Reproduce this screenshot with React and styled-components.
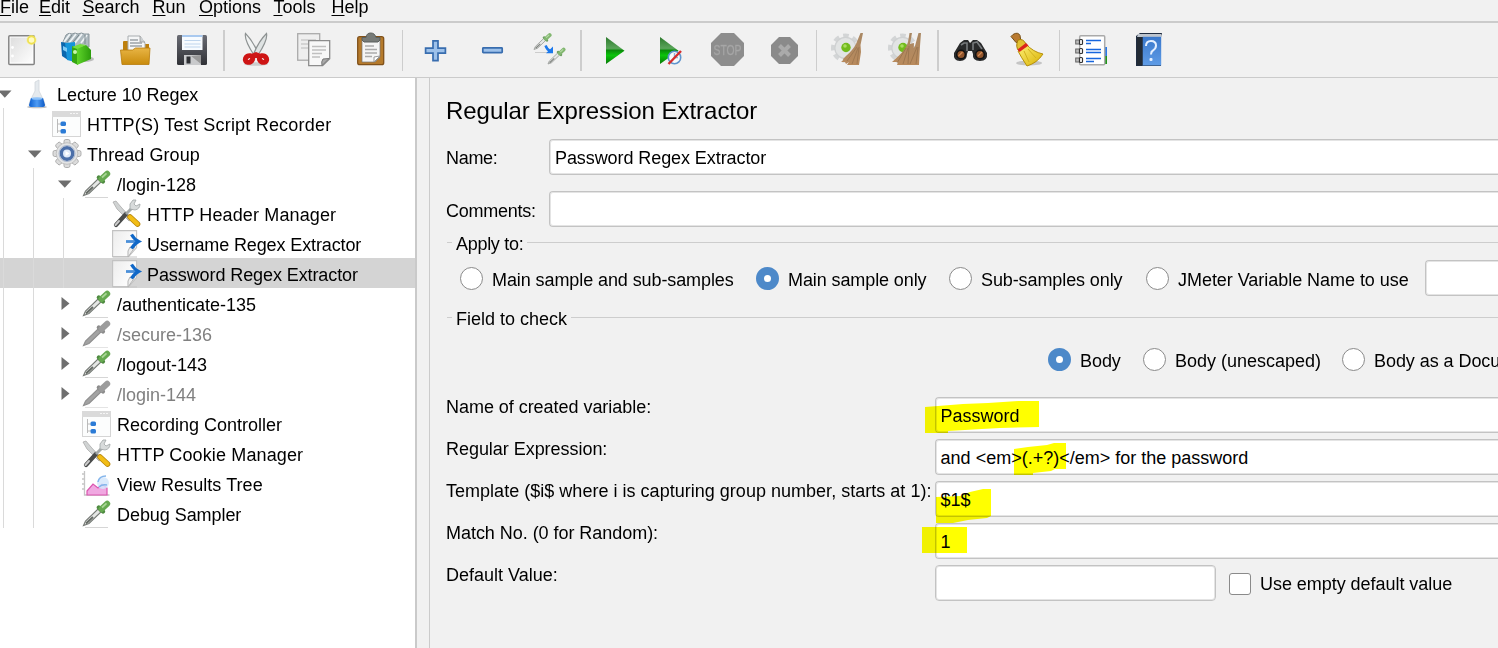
import React from 'react';
import styled, { createGlobalStyle } from 'styled-components';

const Global = createGlobalStyle`
  html, body { margin: 0; padding: 0; background: #f1f1f1; overflow: hidden; }
  * { box-sizing: border-box; }
`;

const Window = styled.div`
  display: flex; flex-direction: column; width: 1498px; height: 648px; overflow: hidden;
  background: #f1f1f1; color: #000; white-space: nowrap; font-kerning: none;
  font: 18px/20px "Liberation Sans", Arial, sans-serif;
`;
const MenuBar = styled.nav`
  display: flex; flex: none; height: 23px; border-bottom: 2px solid #cbcbcb;
`;
const MenuItem = styled.span`
  flex: none; width: ${p => p.$w}px; margin-top: -3px; margin-left: -1px; padding-left: 1px;
  u { text-underline-offset: 2px; text-decoration-thickness: 1px; text-decoration-skip-ink: none; }
`;
const ToolBar = styled.div`
  display: flex; flex: none; height: 55px; padding-top: 7px; border-bottom: 1px solid #cbcbcb;
`;
const ToolGroup = styled.div`
  display: flex; &:first-child { margin-left: -7px; }
`;
const ToolButton = styled.span`
  width: 57px; padding: 2px 11px 0 10px;
  svg { display: block; width: 36px; height: 36px; overflow: visible; }
`;
const Separator = styled.span`
  flex: none; width: ${p => p.$w}px; height: 41px; padding-left: ${p => p.$at}px;
  &::before { content: ""; display: block; width: ${p => p.$t}px; height: 100%; background: #cdcdcd; }
`;
const Main = styled.div` display: flex; flex: 1; min-height: 0; `;
const Tree = styled.div`
  flex: none; width: 417px; background: #fff; border-right: 2px solid #cacaca;
`;
const TreeRow = styled.div`
  display: flex; height: 30px; padding-left: 3px;
  background: ${p => (p.$selected ? '#d4d4d4' : 'transparent')};
  color: ${p => (p.$disabled ? '#808080' : '#000')};
`;
const Guide = styled.span` flex: none; width: 30px; border-left: 1px solid #dadada; `;
const Toggle = styled.svg` flex: none; width: 19px; height: 30px; overflow: visible; `;
const TreeIcon = styled.svg` flex: none; width: 30px; height: 30px; overflow: visible; `;
const TreeText = styled.span` padding: 7px 0 0 5px; letter-spacing: ${p => p.$ls || 0}px; `;
const Panel = styled.main`
  flex: 1; min-width: 0; margin-left: 12px; padding: 20px 0 0 16px; border-left: 1px solid #cbcbcb; overflow: hidden;
`;
const Heading = styled.h1` margin: 0; height: 41px; font-size: 24px; line-height: 26px; font-weight: 400; letter-spacing: -0.03px; `;
const NameRow = styled.div` display: flex; height: 36px; margin-bottom: ${p => p.$gap || 0}px; `;
const Label = styled.label` flex: none; width: ${p => p.$w}px; padding-top: ${p => p.$top || 0}px; letter-spacing: ${p => p.$ls || 0}px; `;
const Field = styled.div`
  position: relative; flex: ${p => (p.$w ? 'none' : 1)}; width: ${p => (p.$w ? p.$w + 'px' : 'auto')};
  height: 36px; padding: 8px 0 0 5px; background: #fff; border: 1px solid #c3c3c3; letter-spacing: ${p => p.$ls || 0}px;
  box-shadow: inset 0 0 0 1px #e4e4e4; border-radius: 4px;
  ${p => !p.$w && 'border-right: 0; border-top-right-radius: 0; border-bottom-right-radius: 0; margin-right: -4px;'}
`;
const GroupTitle = styled.div`
  display: flex; align-items: center; height: 20px; gap: 4px; letter-spacing: ${p => p.$ls || 0}px;
  &::before { content: ""; width: 5px; height: 1px; margin: -3px 0 0 1px; background: #cdcdcd; }
  &::after { content: ""; flex: 1; height: 1px; margin-top: -3px; background: #cdcdcd; }
`;
const Radios = styled.div`
  display: flex; height: 36px; padding-left: ${p => p.$left}px; margin: ${p => p.$m};
`;
const RadioItem = styled.span`
  display: flex; flex: none; width: ${p => p.$w}px; gap: 9px; padding-top: 10px; letter-spacing: ${p => p.$ls ?? -0.06}px;
`;
const Dot = styled.i`
  width: 23px; height: 23px; margin-top: -3px; border-radius: 50%;
  border: ${p => (p.$on ? '8px solid #4d89c9' : '1.5px solid #8a8a8a')}; background: #fff;
`;
const Form = styled.div` display: flex; flex-direction: column; gap: 6px; `;
const FormRow = styled.div` display: flex; height: 36px; `;
const Check = styled.i`
  width: 22px; height: 22px; margin: 8px 9px 0 13px; border: 1.5px solid #8a8a8a; border-radius: 3px; background: #fff;
`;
const CheckLabel = styled.span` padding-top: 9px; letter-spacing: -0.04px; `;
const Marker = styled.svg`
  position: absolute; left: -18px; top: -6px; width: 160px; height: 50px; mix-blend-mode: multiply; pointer-events: none;
`;

const Defs = () => (
  <svg width="0" height="0" style={{ position: 'absolute' }}>
    <defs>
      <linearGradient id="paper" x2="1" y2="1"><stop stopColor="#dedede" /><stop offset="1" stopColor="#fdfdfd" /></linearGradient>
      <linearGradient id="sheet" x2="1" y2=".6"><stop stopColor="#ececec" /><stop offset="1" stopColor="#ffffff" /></linearGradient>
      <linearGradient id="gold" x2="0" y2="1"><stop stopColor="#e8b545" /><stop offset="1" stopColor="#c98b0c" /></linearGradient>
      <linearGradient id="dark" x2="0" y2="1"><stop stopColor="#6a6c74" /><stop offset="1" stopColor="#303136" /></linearGradient>
      <linearGradient id="play" x2="0" y2="1"><stop stopColor="#2c7a2c" /><stop offset=".42" stopColor="#5aa45a" /><stop offset=".5" stopColor="#0a8d0a" /><stop offset=".68" stopColor="#0bc50b" /><stop offset="1" stopColor="#087808" /></linearGradient>
      <linearGradient id="broomTan" x2="0" y2="1"><stop stopColor="#a98864" /><stop offset="1" stopColor="#b98a5c" /></linearGradient>
      <linearGradient id="blue" x2="0" y2="1"><stop stopColor="#3a78cc" /><stop offset="1" stopColor="#5f9ce6" /></linearGradient>
      <linearGradient id="liquid" x2="1"><stop stopColor="#0c5fd0" /><stop offset=".5" stopColor="#4f9cf4" /><stop offset="1" stopColor="#0b58c4" /></linearGradient>
      <linearGradient id="green" x2="1"><stop stopColor="#5fd52a" /><stop offset="1" stopColor="#2c9c0c" /></linearGradient>
      <linearGradient id="straw" x2="1" y2="1"><stop stopColor="#fff27a" /><stop offset="1" stopColor="#d8b000" /></linearGradient>
    </defs>
  </svg>
);

const NewFile = () => (
  <svg viewBox="0 0 36 36"><rect x="5.8" y="3.8" width="25.4" height="28.6" rx="1" fill="#fff" stroke="#858585" strokeWidth="1.5" />
    <rect x="7.5" y="5.5" width="22" height="25" fill="url(#paper)" />
    <g fill="#fff"><circle cx="9.5" cy="15.5" r="1.4" /><circle cx="9.5" cy="24" r="1.4" /></g>
    <circle cx="28.5" cy="8" r="5" fill="#f7ee72" opacity=".6" /><circle cx="28.5" cy="8" r="3.6" fill="#fffbc0" stroke="#efe050" strokeWidth="1.6" /></svg>
);
const Templates = () => (
  <svg viewBox="0 0 36 36"><ellipse cx="25" cy="27" rx="9" ry="3" fill="#999" opacity=".6" />
    <path d="M3 10 L6 3 Q9 0 12 2 Q15 0 18 2 Q22 0 24 2 L29 2 V15 H3Z" fill="#aebac0" stroke="#8b979d" />
    <path d="M4 10L10 2M9 11L16 2M15 11L22 2M21 11L27 3" fill="none" stroke="#eef3f5" strokeWidth="1.8" />
    <path d="M7 10L12 3M13 10L19 3M25 12V3" fill="none" stroke="#79868c" />
    <path d="M1 10 L7 11 L8 28 L2 24Z" fill="#0c67ad" /><path d="M5 11 L15 10 V30 L7 28Z" fill="#1695da" /><path d="M3 14l4 2v4l-4-2z" fill="#7ecbf5" />
    <path d="M12 14 L17 16 L18 33 L12 30Z" fill="#35a512" /><path d="M17 16 L26 13 L31 18 V27 L17 33Z" fill="url(#green)" /><path d="M12 15 L20 12 L26 13 L17 17Z" fill="#78df3e" /><circle cx="15" cy="20" r="2" fill="#c9f5ae" /></svg>
);
const OpenFile = () => (
  <svg viewBox="0 0 36 36"><path d="M6 10q0-1 1-1h8l2 3h15v18H6Z" fill="#bd7f0c" />
    <path d="M11 4h12l5 7v11H11Z" fill="#f5f6f7" stroke="#a9adb0" /><path d="M13 8h8M13 11h12M13 14h12" stroke="#9ca3a8" strokeWidth="1.3" /><path d="M23 4v6h5" fill="#ccd0d3" stroke="#999" strokeWidth=".8" />
    <path d="M3.5 18h12l3-2h14.5l-1 16.5H5Z" fill="url(#gold)" stroke="#b87b0a" strokeWidth=".8" /></svg>
);
const Save = () => (
  <svg viewBox="0 0 36 36"><rect x="3" y="3" width="30" height="30" rx="1.5" fill="url(#dark)" /><rect x="8" y="3" width="20.5" height="15" fill="#f7fbff" />
    <path d="M8 3h20.5v2H8z" fill="#a9c9ef" /><path d="M10.5 8.5h16M10.5 12h16M10.5 15h16" stroke="#c0d6ee" strokeWidth="1.2" /><rect x="10" y="23" width="17" height="10" fill="#c9cacc" /><path d="M17 24l10 8V23z" fill="#999" /><rect x="12.5" y="24.5" width="4" height="7" fill="#2f3034" /></svg>
);
const Cut = () => (
  <svg viewBox="0 0 36 36"><ellipse cx="18" cy="32" rx="12" ry="1.8" fill="#ccc" />
    <path d="M7.5 1.5Q6 8 16 23L20 21Q15 9 7.5 1.5Z" fill="#f1f3f3" stroke="#8d9292" strokeWidth="1.2" /><path d="M28.5 1.5Q30 8 20 23L16 21Q21 9 28.5 1.5Z" fill="#dfe3e3" stroke="#8d9292" strokeWidth="1.2" />
    <path d="M13 22l5-2 5 2-2 4h-6z" fill="#cd1818" />
    <g fill="#f1f1f1" stroke="#ce1515" strokeWidth="5"><ellipse cx="11" cy="27" rx="3.8" ry="3.2" transform="rotate(-30 11 27)" /><ellipse cx="25" cy="27" rx="3.8" ry="3.2" transform="rotate(30 25 27)" /></g></svg>
);
const Copy = () => (
  <svg viewBox="0 0 36 36"><rect x="2.7" y="1.7" width="22" height="26.5" fill="#eee" stroke="#aaa" strokeWidth="1.3" /><path d="M6 8h15M6 12h12M6 16h13" stroke="#ccc" strokeWidth="1.4" />
    <path d="M13.7 8.7h21v18l-7 7h-14Z" fill="#f8f8f8" stroke="#8d8d8d" strokeWidth="1.3" /><path d="M17 14.5h14M17 18h14M17 21.5h10M17 25h8" stroke="#c0c0c0" strokeWidth="1.3" /><path d="M34 26.5l-7 7q-1-4 1-6.5z" fill="#aaa" stroke="#777" /></svg>
);
const Paste = () => (
  <svg viewBox="0 0 36 36"><rect x="5.7" y="4.7" width="26" height="28" rx="2" fill="#b57a2b" stroke="#80511a" strokeWidth="1.3" />
    <path d="M10 8h18v17l-5 5H10Z" fill="#f5f5f5" stroke="#777" strokeWidth=".7" /><path d="M13 14h9M13 17.5h12M13 21h12M13 24.5h7" stroke="#aaa" strokeWidth="1.6" /><path d="M28 24l-6 6v-5z" fill="#fff" stroke="#999" /><path d="M10 8V5.5h4Q14.5 1 18.7 1T24 5.5h4V8l-2 2H12Z" fill="#777b78" stroke="#5b5f5c" /></svg>
);
const Plus = () => (
  <svg viewBox="0 0 36 36"><path d="M17 8.8h5v7.4h7.4v5H22v7.4h-5v-7.4H9.6v-5H17Z" fill="#9dc1ea" stroke="#386daf" strokeWidth="1.7" /></svg>
);
const Minus = () => (
  <svg viewBox="0 0 36 36"><rect x="9.8" y="15.8" width="19.4" height="4.8" rx=".6" fill="#9dc1ea" stroke="#386daf" strokeWidth="1.7" /></svg>
);
const Dropper = ({ t, off }) => (
  <g transform={t}>
    <path d="M1.5 25 L3.5 20.5 L16 8.5 L19 11.5 L7 23 Z" fill={off ? '#a3a3a3' : '#e4e6e4'} stroke={off ? '#8f8f8f' : '#767a76'} strokeWidth="1.1" />
    {!off && <path d="M4 23 L11 16.5" stroke="#666b66" strokeWidth="2" />}
    <path d="M16.8 7 L21 11" stroke={off ? '#8b8b8b' : '#4d8a3f'} strokeWidth="4.2" strokeLinecap="round" />
    <path d="M19.5 8.5 L25.2 3.2" stroke={off ? '#9b9b9b' : '#67a951'} strokeWidth="6" strokeLinecap="round" />
    {!off && <path d="M20 7 L24.5 2.8" stroke="#a9d795" strokeWidth="1.8" />}
  </g>
);
const ToggleIcon = () => (
  <svg viewBox="0 0 36 36"><path d="M5 20.5h17" stroke="#ccc" /><g opacity=".8"><Dropper t="translate(3 1) scale(.66)" /><Dropper t="translate(17 15.5) scale(.66)" /></g><path d="M15.5 13.5 Q17 18 21 19.5" fill="none" stroke="#1c79ec" strokeWidth="2.4" /><path d="M23 14.5v6.8h-7z" fill="#1c79ec" /></svg>
);
const Start = () => <svg viewBox="0 0 36 36"><path d="M10 5L28.5 18.7 10 32Z" fill="url(#play)" /></svg>;
const StartNoPause = () => (
  <svg viewBox="0 0 36 36"><path d="M7 5L25.5 18.7 7 32Z" fill="url(#play)" /><circle cx="21.5" cy="25.5" r="6.2" fill="#f7f9fb" stroke="#5e94cd" strokeWidth="1.6" /><path d="M21.5 21v4.5h3.5" fill="none" stroke="#8ab1dc" strokeWidth="1.4" /><path d="M15.5 32L28 19" stroke="#d52c2c" strokeWidth="2.4" /></svg>
);
const Stop = () => (
  <svg viewBox="0 0 36 36"><path d="M11 1h13l10 10v13L24 34H11L1 24V11Z" fill="#8d8d8d" /><text x="17.5" y="23" textAnchor="middle" textLength="28" lengthAdjust="spacingAndGlyphs" fontSize="15" fontWeight="400" fill="#a8a8a8" stroke="#a0a0a0" strokeWidth=".4">STOP</text></svg>
);
const Shutdown = () => (
  <svg viewBox="0 0 36 36"><path d="M12 5h11l8 8v11l-8 8H12l-8-8V13Z" fill="#8a8a8a" /><path d="M12.5 13.5l10 10m0-10l-10 10" stroke="#aaa" strokeWidth="4" /></svg>
);
const Gear = () => (
  <g><circle cx="16.5" cy="16" r="11.8" fill="none" stroke="#d3d5d6" strokeWidth="5.5" strokeDasharray="5.3 3.97" strokeDashoffset="2.6" /><circle cx="16.5" cy="16" r="11.3" fill="#cfd1d2" /><circle cx="16.5" cy="16" r="10" fill="#e2e4e4" /><circle cx="17" cy="15.5" r="4.7" fill="#72bb1d" /><circle cx="16" cy="14" r="1.8" fill="#aadd5f" /></g>
);
const Clear = () => (
  <svg viewBox="0 0 36 36"><Gear /><path d="M31.5 1H34L31.5 13 32 20 30 33H18l2-3-3 2-1-2h-4q3-2 2-3l3-3q7-6 10-12Z" fill="url(#broomTan)" /><path d="M28 15L18 29M29 16l-6 16M30 15l-2 17" stroke="#8f6b46" strokeWidth=".8" opacity=".7" /></svg>
);
const ClearAll = () => (
  <svg viewBox="0 0 36 36"><Gear /><path d="M23.5 1H26L24 12l4-1-1 19-4 3H11l1-3H6q8-7 12-12 3-4 4-8ZM32.5 1H35l-1 13-1 19H21l-1-4q6-10 9-15Z" fill="url(#broomTan)" /><path d="M20 16L11 31M22 16l-5 16M23 14l-1 18M31 15l-7 17M32 15l-2 17" stroke="#8f6b46" strokeWidth=".9" opacity=".7" /></svg>
);
const Search = () => (
  <svg viewBox="0 0 36 36"><path d="M8 11L12 8h4l2 3 3-3h4l4 3 6 10q1 8-7 8t-7-7l-1-3h-4l-1 3q0 7-7 7t-6-8Z" fill="#292a2b" /><path d="M9 13l3-2h3v8M21 18v-7l4-1 5 7" fill="none" stroke="#777b7d" strokeWidth="1.6" /><circle cx="9" cy="22.5" r="4.3" fill="#91552c" stroke="#111" strokeWidth="1.5" /><circle cx="28" cy="22.5" r="4.3" fill="#91552c" stroke="#111" strokeWidth="1.5" /><path d="M6.5 24l4-4M26 24l4-4" stroke="#d58c56" strokeWidth="1.2" /></svg>
);
const Broom = () => (
  <svg viewBox="0 0 36 36"><ellipse cx="20" cy="31" rx="13" ry="2.5" fill="#c5c5c5" /><path d="M4 2.5q5-3 7 1l1 6-5 1-5-6Z" fill="#b97a30" stroke="#77501a" /><path d="M9 8q5-2 8 4l-7 7q-4-4-1-11Z" fill="#e2c132" stroke="#a87e06" /><path d="M17 12Q24 20 34 22Q28 31 18 34Q12 25 9 19Z" fill="url(#straw)" stroke="#b68f09" /><path d="M15 19l5 11M19 17l8 9" stroke="#d3b11f" /><path d="M8.5 17.5L17 11l2.5 2.5-9 6.5Z" fill="#db241e" /></svg>
);
const FunctionHelper = () => (
  <svg viewBox="0 0 36 36"><path d="M31 15h4v9h-4z" fill="#2979e8" /><path d="M31 24h4v8h-4z" fill="#1f9418" /><rect x="7.7" y="3.7" width="25" height="29" rx="1" fill="#fff" stroke="#aaa" strokeWidth="1.5" /><path d="M14 8.5h15M14 11.5h5M14 17.5h15M14 20.5h15M14 26.5h15M14 29.5h8" stroke="#1766dd" strokeWidth="1.3" />
    {[10, 19, 28].map(y => <g key={y}><rect x="3.7" y={y - 2} width="4" height="4" fill="#bbb" stroke="#666" /><rect x="7.5" y={y - 2.5} width="3" height="5" rx="1" fill="#fff" stroke="#333" strokeWidth="1.2" /></g>)}</svg>
);
const Help = () => (
  <svg viewBox="0 0 36 36"><path d="M7 4l4-3h22l-1 4v29H7Z" fill="#1f2c40" /><path d="M9 2h23l1 3H8Z" fill="#bec5ce" /><rect x="13.5" y="4.8" width="18.7" height="28.7" fill="url(#blue)" /><path d="M8 5h5.5v28H8z" fill="#222a34" /><path d="M17 14q0-5 5-5t5 4.5q0 3-3 5-2 1-2 4" fill="none" stroke="#e5f0ff" strokeWidth="2" /><rect x="20.5" y="26" width="3" height="3" rx="1" fill="#e5f0ff" /></svg>
);

const toolGroups = [
  { icons: [NewFile, Templates, OpenFile, Save], sep: [7, 2, 2] },
  { icons: [Cut, Copy, Paste], sep: [7, 3, 1] },
  { icons: [Plus, Minus, ToggleIcon], sep: [9, 3, 2] },
  { icons: [Start, StartNoPause, Stop, Shutdown], sep: [5, 2, 1] },
  { icons: [Clear, ClearAll], sep: [9, 4, 2] },
  { icons: [Search, Broom], sep: [6, 3, 1] },
  { icons: [FunctionHelper, Help] },
];

const gearTeeth = Array.from({ length: 8 }, (_, k) => k * 45);

const treeIcons = {
  flask: <g><ellipse cx="15" cy="29" rx="10" ry="1.3" fill="#bbb" /><path d="M13 4l4-2v11l5 10 1 4q0 2-2 2H9q-2 0-2-2l1-4 5-10Z" fill="#e5eaee" stroke="#d0d6da" strokeWidth=".8" /><path d="M9 20h12l2 7q0 2-2 2H9q-2 0-2-2Z" fill="url(#liquid)" /><ellipse cx="15" cy="20.5" rx="5.5" ry="1.3" fill="#8fc3fa" /></g>,
  recorder: <g><rect x=".5" y="4.5" width="28" height="24" fill="#fcfdfd" stroke="#d5d5d5" /><rect y="3" width="29" height="6" fill="#dadada" /><path d="M18 5.5h9" stroke="#f5f5f5" strokeDasharray="2 1" /><path d="M5.5 11v14M5.5 16h4M5.5 23h4" stroke="#bbb" /><g fill="#2b7bd6"><rect x="8.5" y="13.5" width="5.5" height="4.5" rx="1.5" /><rect x="8.5" y="21" width="5.5" height="4.5" rx="1.5" /></g></g>,
  gear: <g><g fill="#dcdcdc" stroke="#a8a8a8" strokeWidth=".9">{gearTeeth.map(a => <rect key={a} x="12" y="1.5" width="6" height="8" rx="1.8" transform={`rotate(${a} 15 15.5)`} />)}</g><circle cx="15" cy="15.5" r="10.8" fill="#e2e3e4" stroke="#b8b8b8" strokeWidth=".8" /><circle cx="15" cy="15.5" r="5.7" fill="#dfe9f8" stroke="#4b6fa9" strokeWidth="3.4" /><circle cx="15" cy="15.5" r="8" fill="none" stroke="#a6b4cc" /><path d="M13.5 13l4 2.5-4 2.5z" fill="#fff" /></g>,
  dropper: <g><path d="M3 29.5h23" stroke="#ccc" strokeWidth=".8" /><Dropper t="translate(0 2.5)" /></g>,
  dropperOff: <g><path d="M3 29.5h23" stroke="#ddd" strokeWidth=".8" /><Dropper t="translate(0 2.5)" off /></g>,
  tools: <g transform="translate(0 2)"><path d="M1 2l3-1 5 6 11 12-3 2L5 9Z" fill="#d0d3d3" stroke="#a5a5a5" strokeWidth=".7" /><path d="M18 17L25.5 24" stroke="#b8860b" strokeWidth="5.6" strokeLinecap="round" /><path d="M18 17L25.5 24" stroke="#f2bd16" strokeWidth="4" strokeLinecap="round" /><path d="M4 25L14 14" stroke="#4a4c4c" strokeWidth="4.2" strokeLinecap="round" /><path d="M3.5 25L7 21" stroke="#c9c9c9" strokeWidth="2" strokeLinecap="round" /><path d="M14 14L21 7" stroke="#a3a8a8" strokeWidth="3" /><path d="M18 9l0-5 3-4 3 0-2 4 2 2 4-2q0 5-5 6Z" fill="#d8dbdb" stroke="#a0a4a4" strokeWidth=".8" /></g>,
  extractor: <g><path d="M.6 2.6h24v17l-8 9H.6Z" fill="url(#sheet)" stroke="#c2c2c2" strokeWidth="1.1" /><path d="M1 29h24" stroke="#c5c5c5" /><path d="M23 19l-7 10q-1-7 2-10Z" fill="#eee" stroke="#b5b5b5" /><path d="M14 13.5h11" stroke="#4b8fd8" strokeWidth="2.8" /><path d="M19.5 6.5q3 5 7 7-4 2-7 7" fill="none" stroke="#1068c8" strokeWidth="3.2" /></g>,
  chart: <g transform="translate(0 1)"><path d="M2.5 2v24h25M0 5h2M0 10h2M0 15h2M0 20h2" fill="none" stroke="#c5c5c5" strokeWidth="1.3" /><path d="M5 22l6-7 5 4 4-4 5 4v7H5Z" fill="#f0a8e1" stroke="#db55af" strokeWidth="1.2" /><circle cx="21" cy="14" r="6" fill="#d3e6fb" opacity=".85" /><path d="M16 13q1-6 8-6M17 18q3-3 8-2" fill="none" stroke="#83b4eb" strokeWidth="1.5" /></g>,
};

const nodes = [
  [0, 'flask', 'Lecture 10 Regex', 'open', '', -0.05],
  [1, 'recorder', 'HTTP(S) Test Script Recorder', '', '', 0.2],
  [1, 'gear', 'Thread Group', 'open', '', 0.06],
  [2, 'dropper', '/login-128', 'open'],
  [3, 'tools', 'HTTP Header Manager', '', '', 0.13],
  [3, 'extractor', 'Username Regex Extractor', '', '', -0.12],
  [3, 'extractor', 'Password Regex Extractor', '', 'selected', -0.09],
  [2, 'dropper', '/authenticate-135', 'closed'],
  [2, 'dropperOff', '/secure-136', 'closed', 'off'],
  [2, 'dropper', '/logout-143', 'closed'],
  [2, 'dropperOff', '/login-144', 'closed', 'off'],
  [2, 'recorder', 'Recording Controller'],
  [2, 'tools', 'HTTP Cookie Manager', '', '', 0.13],
  [2, 'chart', 'View Results Tree', '', '', 0.06],
  [2, 'dropper', 'Debug Sampler', '', '', -0.06],
];
const toggles = { open: 'M-5 12.5H8.5L1.8 19.7Z', closed: 'M-1.5 9V22L6.5 15.5Z' };

const menus = [['F', 'ile', 40], ['E', 'dit', 44.5], ['S', 'earch', 71], ['R', 'un', 47.5], ['O', 'ptions', 75.5], ['T', 'ools', 59], ['H', 'elp', 60]];

const Radio = ({ w, on, ls, children }) => <RadioItem $w={w} $ls={ls}><Dot $on={on} />{children}</RadioItem>;

const formRows = [
  ['Name of created variable:', 'Password', '7,15 20,14 45,12 70,11 100,9 121,9 121,35 82,36 64,37 30,39 30,41 7,41'],
  ['Regular Expression:', 'and <em>(.+?)</em> for the password', '96,15 110,13 129,11 136,9 148,9 148,35 137,35 133,37 115,39 115,41 96,41'],
  ['Template ($i$ where i is capturing group number, starts at 1):', '$1$', '18,21 42,20 52,16 65,13 73,13 73,40 69,42 50,44 35,47 18,47'],
  ['Match No. (0 for Random):', '1', '4,9 49,9 49,35 4,35'],
];

export default function App() {
  return (
    <Window>
      <Global />
      <Defs />
      <MenuBar>{menus.map(([u, rest, w]) => <MenuItem key={rest} $w={w}><u>{u}</u>{rest}</MenuItem>)}</MenuBar>
      <ToolBar>
        {toolGroups.map(({ icons, sep }, i) => (
          <ToolGroup key={i}>
            {icons.map((Icon, k) => <ToolButton key={k}><Icon /></ToolButton>)}
            {sep && <Separator $w={sep[0]} $at={sep[1]} $t={sep[2]} />}
          </ToolGroup>
        ))}
      </ToolBar>
      <Main>
        <Tree>
          {nodes.map(([level, icon, text, toggle, state, ls]) => (
            <TreeRow key={text} $selected={state === 'selected'} $disabled={state === 'off'}>
              {Array.from({ length: level }, (_, k) => <Guide key={k} />)}
              <Toggle viewBox="0 0 19 30">{toggle && <path d={toggles[toggle]} fill="#6e6e6e" />}</Toggle>
              <TreeIcon viewBox="0 0 30 30">{treeIcons[icon]}</TreeIcon>
              <TreeText $ls={ls}>{text}</TreeText>
            </TreeRow>
          ))}
        </Tree>
        <Panel>
          <Heading>Regular Expression Extractor</Heading>
          <NameRow $gap={16}><Label $w={103} $top={9} $ls={-0.3}>Name:</Label><Field $ls={-0.08}>Password Regex Extractor</Field></NameRow>
          <NameRow $gap={7}><Label $w={103} $top={10} $ls={-0.25}>Comments:</Label><Field /></NameRow>
          <GroupTitle $ls={-0.3}>Apply to:</GroupTitle>
          <Radios $left={14} $m="6px 0 13px">
            <Radio w={296} ls={-0.09}>Main sample and sub-samples</Radio>
            <Radio w={193} on ls={-0.1}>Main sample only</Radio>
            <Radio w={197} ls={-0.1}>Sub-samples only</Radio>
            <Radio w={279} ls={-0.04}>JMeter Variable Name to use</Radio>
            <Field />
          </Radios>
          <GroupTitle>Field to check</GroupTitle>
          <Radios $left={602} $m="12px 0 20px">
            <Radio w={95} on>Body</Radio>
            <Radio w={199} ls={0}>Body (unescaped)</Radio>
            <Radio w={200}>Body as a Document</Radio>
          </Radios>
          <Form>
            {formRows.map(([label, value, points]) => (
              <FormRow key={label}>
                <Label $w={488.6} $ls={label.startsWith('Template') ? 0.02 : -0.04}>{label}</Label>
                <Field>{value}<Marker viewBox="0 0 160 50"><polygon points={points} fill="#ff0" /></Marker></Field>
              </FormRow>
            ))}
            <FormRow>
              <Label $w={488.6}>Default Value:</Label>
              <Field $w={281.4} />
              <Check />
              <CheckLabel>Use empty default value</CheckLabel>
            </FormRow>
          </Form>
        </Panel>
      </Main>
    </Window>
  );
}
